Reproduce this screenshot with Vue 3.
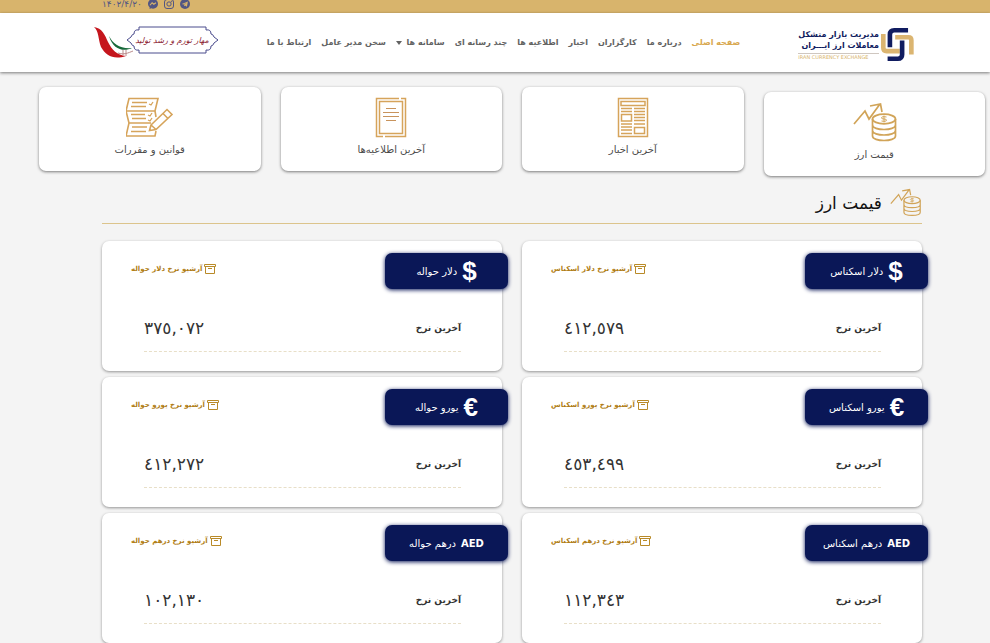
<template>
  <div class="page" dir="rtl">
    <div class="topbar">
      <a href="#" aria-label="تلگرام">
        <svg viewBox="0 0 20 20">
          <circle cx="10" cy="10" r="10" fill="#525683" />
          <path d="M3.5 9.8 15.8 5 13.8 15.5 10 12.8 8.2 14.5 8 11.6 13 7.3 6.9 11.1Z" fill="#d8b46c" />
        </svg>
      </a>
      <a href="#" aria-label="اینستاگرام">
        <svg viewBox="0 0 20 20" fill="none" stroke="#525683" stroke-width="2">
          <rect x="1" y="1" width="18" height="18" rx="5" />
          <circle cx="10" cy="10" r="4.3" />
          <circle cx="15" cy="5" r=".6" />
        </svg>
      </a>
      <a href="#" aria-label="پیام رسان">
        <svg viewBox="0 0 20 20">
          <path d="M10 0C4 0 0 4.3 0 9.6c0 3 1.200 5.300 3.200 7V20l3-1.300c1.200.4 2.500.6 3.800.6 6 0 10-4.300 10-9.700S16 0 10 0Z" fill="#525683" />
          <path d="m4 12.500 4.200-5 3.400 3L16 7.500" fill="none" stroke="#d8b46c" stroke-width="2.200" />
        </svg>
      </a>
      <span class="date">۱۴۰۲/۴/۲۰</span>
    </div>

    <header class="header">
      <a href="#" class="logo">
        <svg class="logo-mark" viewBox="0 0 100 100" fill="none" stroke-width="14">
          <path d="M7 18V60Q7 70 17 70H57" stroke="#dbb571" />
          <path d="M43 28H83Q92 28 92 37V80" stroke="#dbb571" />
          <path d="M27 58V20Q27 7 40 7H82" stroke="#101c60" />
          <path d="M64 38V80Q64 93 51 93H20" stroke="#101c60" />
        </svg>
        <span class="logo-text">
          <span>مدیریت بازار متشکل</span>
          <span>معاملات ارز ایـــران</span>
          <small>IRAN CURRENCY EXCHANGE</small>
        </span>
      </a>
      <nav class="nav">
        <template v-for="(item, index) in menu" :key="item">
          <button v-if="item === 'سامانه ها'" type="button">{{ item }} <i class="caret"></i></button>
          <a v-else href="#" :class="{ active: index === 0 }">{{ item }}</a>
        </template>
      </nav>
      <svg class="slogan" viewBox="0 0 126 34">
        <path d="M1 1C9 2 12 9 15 16 19 24 24 29 33 30 21 34 13 30 8 21 5 13 6 5 1 1Z" fill="#c5161d" />
        <path d="M16 10C20 18 27 23 39 22 31 26 20 24 16 10Z" fill="#17683a" />
        <path d="M25 27c6 2 10 0 15-2M30 24v5m3-5v6" fill="none" stroke="#b98a8a" stroke-width="1" />
        <path d="M46 1H113V4Q118 3 118 8 120 8 121 11L125 14 121 17Q120 20 118 20 118 25 113 24V27H46V24Q41 25 41 20 39 20 38 17L34 14 38 11Q39 8 41 8 41 3 46 4Z" fill="#fff" stroke="#4b4c8d" />
        <text x="79" y="17" text-anchor="middle">مهار تورم و رشد تولید</text>
      </svg>
    </header>

    <main>
      <section class="shortcuts">
        <a v-for="item in shortcuts" :key="item.icon" href="#" class="shortcut" :class="{ current: item.icon === 'coins' }">
          <svg v-if="item.icon === 'coins'" class="shortcut-icon" viewBox="0 0 48 42">
            <use href="#coins" />
          </svg>
          <svg v-else-if="item.icon === 'news'" class="shortcut-icon" viewBox="0 0 48 42" fill="none" stroke="#d6a45b" stroke-width="1.500">
            <rect x="9.500" y="1.500" width="29" height="38" />
            <rect x="12" y="4.500" width="24" height="4" />
            <rect x="12.500" y="17.500" width="10" height="6.500" />
            <rect x="25.500" y="30.500" width="10" height="6" />
            <path d="M12 11.500h11m2 0h11M12 14.500h11m2 0h11M25 17.500h11M25 20.500h11M25 23.500h11M12 27h11m2 0h11M12 30h11M12 33h11M12 36.500h11" />
          </svg>
          <svg v-else-if="item.icon === 'notice'" class="shortcut-icon" viewBox="0 0 48 42" fill="none" stroke="#d6a45b" stroke-width="1.500">
            <path d="M32 1.500H9.500V39.500H16M18 39.500H38.500V1.500H34" />
            <rect x="12.500" y="4.500" width="23" height="32" />
            <path d="M19 11.500h10M16 15.500h16M16 19.500h16M19 23.500h10" stroke="#c8935c" stroke-width="1.200" />
          </svg>
          <svg v-else class="shortcut-icon" viewBox="0 0 48 42" fill="none" stroke="#d6a45b" stroke-width="1.600">
            <path d="M3 1.500H32L29 14H0L3 1.500ZM0 14l3 12L0 39H29l1-5M29 14l1 6M3 26H25" />
            <path d="M6 5.500h15M5 9.500h15M5 17.500h14M6 21.500h14M6 30h15M5 34.500h15M23 7l2 1 2-3M22 18l2 1 2-3M22 23l2 1 2-3" stroke-width="1.300" />
            <path d="m25 28 16-15.500 5 5L30 32.500l-6.500 1Zm0 0 5 4.500M37 16.500l5 5" />
          </svg>
          <span>{{ item.label }}</span>
        </a>
      </section>

      <section class="rates">
        <h1>
          <svg viewBox="0 0 48 42">
            <g id="coins" fill="none" stroke="#d1a458" stroke-width="1.700">
              <path d="M4 22 15 9l4 8L30 2M20 4l10.500-2L32 10" />
              <ellipse cx="34" cy="17" rx="11.500" ry="4.800" />
              <path d="M22.500 17V34c0 6 23 6 23 0V17M22.500 23c0 6 23 6 23 0M22.500 28.500c0 6 23 6 23 0" />
              <path d="M36.500 15q-5-1-5 1 0 1 2.500 1t2.500 1q0 2-5 1M34 13.500v7" stroke-width="1" />
            </g>
          </svg>
          <span>قیمت ارز</span>
        </h1>
        <div class="rate-grid">
          <article v-for="rate in rates" :key="rate.name" class="rate-card">
            <h2 class="badge">
              <b :class="{ code: rate.symbol === 'AED' }">{{ rate.symbol }}</b>
              <span>{{ rate.name }}</span>
            </h2>
            <a href="#" class="archive">
              <svg viewBox="0 0 12 10" fill="none" stroke="#b98a28">
                <path d="M.5.500h11v2H.500ZM1.500 2.500v7h9v-7M4 4.500h4" />
              </svg>
              آرشیو نرخ {{ rate.name }}
            </a>
            <div class="rate-row">
              <strong>آخرین نرخ</strong>
              <span class="value" dir="ltr">{{ rate.value }}</span>
            </div>
          </article>
        </div>
      </section>
    </main>
  </div>
</template>

<script setup>
const menu = [
  'صفحه اصلی',
  'درباره ما',
  'کارگزاران',
  'اخبار',
  'اطلاعیه ها',
  'چند رسانه ای',
  'سامانه ها',
  'سخن مدیر عامل',
  'ارتباط با ما'
]

const shortcuts = [
  { icon: 'coins', label: 'قیمت ارز' },
  { icon: 'news', label: 'آخرین اخبار' },
  { icon: 'notice', label: 'آخرین اطلاعیه‌ها' },
  { icon: 'rules', label: 'قوانین و مقررات' }
]

const rates = [
  { symbol: '$', name: 'دلار اسکناس', value: '٤١٢,٥٧٩' },
  { symbol: '$', name: 'دلار حواله', value: '٣٧٥,٠٧٢' },
  { symbol: '€', name: 'یورو اسکناس', value: '٤٥٣,٤٩٩' },
  { symbol: '€', name: 'یورو حواله', value: '٤١٢,٢٧٢' },
  { symbol: 'AED', name: 'درهم اسکناس', value: '١١٢,٣٤٣' },
  { symbol: 'AED', name: 'درهم حواله', value: '١٠٢,١٣٠' }
]
</script>

<style>
body {
  background: #f4f4f4;
  overflow: hidden;
}
</style>

<style scoped>
.page {
  font-family: "DejaVu Sans", sans-serif;
  color: #333;
}

a {
  color: inherit;
  text-decoration: none;
}

.topbar {
  display: flex;
  justify-content: flex-end;
  align-items: center;
  gap: 6px;
  height: 8px;
  padding: 0 102px 5px;
  background: #d8b46c;
}

.topbar a,
.topbar svg {
  display: block;
  width: 10px;
  height: 10px;
}

.date {
  font-size: 9px;
  color: #525683;
}

.header {
  display: flex;
  align-items: center;
  height: 59px;
  padding: 0 76px 0 93px;
  background: #fff;
  box-shadow: 0 1px 3px rgba(0, 0, 0, 0.5);
}

.logo {
  display: flex;
  align-items: center;
  gap: 2px;
  color: #101c60;
  padding-top: 4px;
}

.logo-mark {
  width: 33px;
  height: 33px;
}

.logo-text {
  display: flex;
  flex-direction: column;
  font-size: 8px;
  font-weight: bold;
  line-height: 11px;
  white-space: nowrap;
}

.logo-text small {
  border-top: 1px solid #cfc7c0;
  font-size: 5px;
  font-weight: normal;
  line-height: 6px;
  margin-top: 2px;
  color: #d8b46c;
  direction: ltr;
}

.nav {
  display: flex;
  align-items: center;
  gap: 10px;
  margin-right: 58px;
  color: #626262;
  font-size: 8px;
  font-weight: bold;
  white-space: nowrap;
}

.nav button {
  padding: 0;
  border: 0;
  background: none;
  color: inherit;
  font: inherit;
}

.nav .active {
  color: #d8a850;
}

.caret {
  display: inline-block;
  margin-right: 2px;
  border: 3px solid transparent;
  border-top: 4px solid #626262;
  border-bottom: 0;
  vertical-align: middle;
}

.slogan {
  width: 126px;
  height: 34px;
  margin-right: auto;
  flex-shrink: 0;
}

.slogan text {
  font-size: 8px;
  font-style: italic;
  fill: #8c2332;
}

.shortcuts {
  display: grid;
  grid-template-columns: repeat(4, 1fr);
  gap: 20px;
  padding: 15px 5px 0 39px;
}

.shortcut {
  display: flex;
  flex-direction: column;
  align-items: center;
  height: 74px;
  padding-top: 10px;
  border-radius: 7px;
  background: #fff;
  box-shadow: 0 1px 3px rgba(0, 0, 0, 0.5);
  color: #4c4c4c;
  font-size: 10px;
  line-height: 22px;
}

.shortcut.current {
  position: relative;
  top: 5px;
}

.shortcut-icon {
  width: 48px;
  height: 42px;
}

.rates {
  padding: 17px 68px 0 102px;
}

h1 {
  display: flex;
  align-items: flex-start;
  gap: 6px;
  height: 35px;
  margin: 0 0 17px;
  border-bottom: 1px solid #dcc48c;
  color: #111;
  font-size: 17px;
  font-weight: normal;
  line-height: 30px;
}

h1 svg {
  width: 34px;
  height: 30px;
}

.rate-grid {
  display: grid;
  grid-template-columns: 1fr 1fr;
  gap: 6px 20px;
}

.rate-card {
  position: relative;
  height: 130px;
  border-radius: 7px;
  background: #fff;
  box-shadow: 0 1px 3px rgba(0, 0, 0, 0.4);
}

.badge {
  position: absolute;
  top: 12px;
  right: -6px;
  display: flex;
  align-items: center;
  justify-content: center;
  gap: 5px;
  width: 123px;
  height: 36px;
  margin: 0;
  border-radius: 7px;
  background: #0a1757;
  box-shadow: 0 1px 4px #0a1757;
  color: #fff;
  font-size: 10px;
  font-weight: normal;
  white-space: nowrap;
}

.badge b {
  font-family: "Liberation Sans", sans-serif;
  font-size: 26px;
}

.badge .code {
  font-family: "DejaVu Sans", sans-serif;
  font-size: 10px;
}

.archive {
  display: flex;
  align-items: center;
  justify-content: flex-end;
  gap: 2px;
  height: 20px;
  padding: 18px 0 0 29px;
  color: #b07d14;
  font-size: 7px;
  font-weight: bold;
}

.archive svg {
  width: 12px;
  height: 10px;
}

.rate-row {
  display: flex;
  align-items: center;
  justify-content: space-between;
  height: 46px;
  margin: 26px 41px 0 42px;
  border-bottom: 1px dashed #e8dfc8;
}

.rate-row strong {
  font-size: 9px;
}

.value {
  font-size: 17px;
}
</style>
